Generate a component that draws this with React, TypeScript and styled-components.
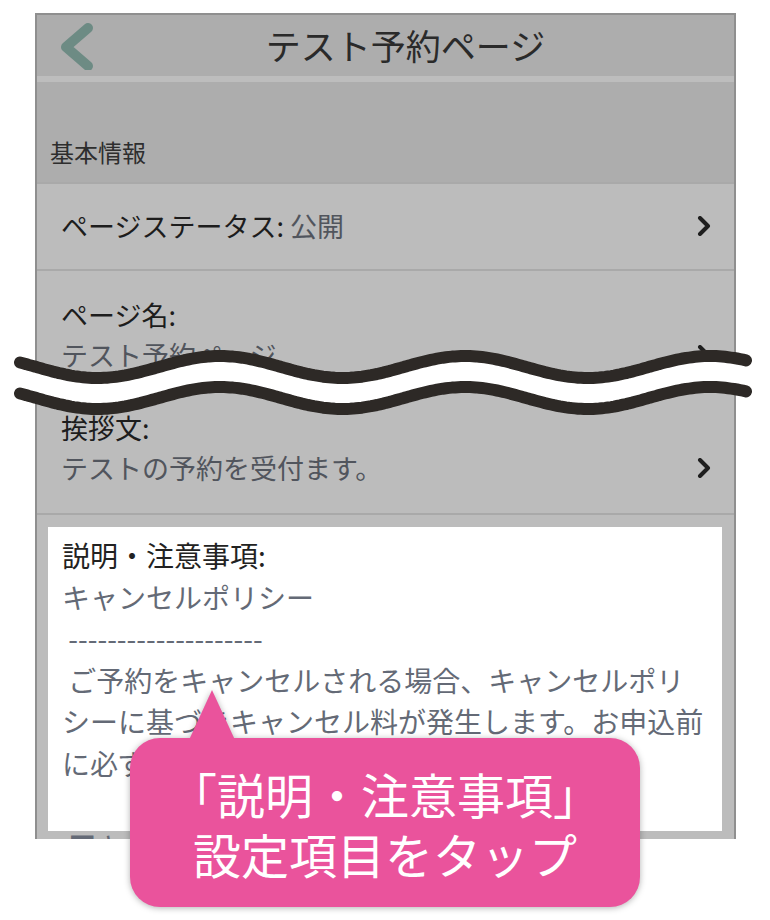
import React from 'react';
import styled, { createGlobalStyle } from 'styled-components';

const GlobalStyle = createGlobalStyle`
  html, body { margin: 0; padding: 0; background: #ffffff; }
  body { font-family: "Noto Sans CJK JP", "Noto Sans", sans-serif; }
  * { box-sizing: border-box; }
`;

const Page = styled.div`
  position: relative;
  width: 770px;
  height: 920px;
  padding: 13px 34px 0 35px;
  overflow: hidden;
`;

const Screen = styled.div`
  width: 701px;
  height: 826px;
  border: 2px solid #8f8f8f;
  border-bottom: none;
  background: #bcbcbc;
  overflow: hidden;
`;

const NavBar = styled.div`
  height: 67px;
  display: flex;
  align-items: center;
  background: #adadad;
  border-bottom: 6px solid #bdbdbd;
`;

const BackButton = styled.div`
  width: 56px;
  margin-left: 24px;
  display: flex;
  align-items: center;
`;

const Title = styled.div`
  flex: 1;
  text-align: center;
  padding-right: 40px;
  padding-bottom: 2px;
  font-size: 35px;
  line-height: 48px;
  color: #2a2a2a;
`;

const SectionHeader = styled.div`
  height: 100px;
  display: flex;
  align-items: flex-end;
  padding: 0 0 13px 13px;
  background: #adadad;
  font-size: 24px;
  line-height: 34px;
  color: #2e2e2e;
`;

const Row = styled.div<{ $top: number; $bottom: number }>`
  border-top: 2px solid #a9a9a9;
  padding: ${(p) => p.$top}px 23px ${(p) => p.$bottom}px 24px;
  background: #bcbcbc;
`;

const Line = styled.div`
  height: 40px;
  display: flex;
  align-items: center;
  justify-content: space-between;
  font-size: 27px;
  line-height: 40px;
  white-space: nowrap;
`;

const Label = styled.span`
  color: #1d1d1d;
`;

const Value = styled.span`
  color: #51555d;
`;

const Highlight = styled.div`
  border-top: 2px solid #a9a9a9;
  padding: 12px 12px 0 11px;
  background: #bcbcbc;
`;

const WhiteBox = styled.div`
  height: 304px;
  background: #ffffff;
  padding: 8px 14px 0;
  font-size: 28px;
  line-height: 41.5px;
`;

const DescLine = styled.div<{ $dark?: boolean }>`
  height: 41.5px;
  white-space: pre;
  color: ${(p) => (p.$dark ? '#222222' : '#646a76')};
`;

const Callout = styled.div`
  position: absolute;
  left: 130px;
  top: 738px;
  width: 510px;
  height: 169px;
  border-radius: 30px;
  background: #ea539c;
  display: flex;
  flex-direction: column;
  align-items: center;
  justify-content: center;
  filter: drop-shadow(0 1px 3px rgba(0, 0, 0, 0.3));
  color: #ffffff;
  font-size: 48px;
  line-height: 60px;
  white-space: nowrap;

  &::before {
    content: '';
    position: absolute;
    left: 59px;
    top: -48px;
    width: 46px;
    height: 50px;
    background: #ea539c;
    clip-path: polygon(50% 0, 100% 100%, 0 100%);
  }
`;

const Overlay = styled.svg`
  position: absolute;
  left: 0;
  top: 0;
  width: 770px;
  height: 920px;
  pointer-events: none;
`;

const Chevron = () => (
  <svg width="14" height="20" viewBox="0 0 14 20">
    <polyline points="3,2 11,10 3,18" fill="none" stroke="#1e1e1e" strokeWidth="4" strokeLinejoin="round" strokeLinecap="round" />
  </svg>
);

const BackIcon = () => (
  <svg width="34" height="48" viewBox="0 0 34 48">
    <polyline points="27,6 5,25 27,44" fill="none" stroke="#6d8b84" strokeWidth="10" strokeLinejoin="round" strokeLinecap="round" />
  </svg>
);

const wavePoints = (offset: number) => {
  const pts: [number, number][] = [];
  for (let x = 20; x <= 746; x += 3) {
    const y = 367 + offset - 11 * Math.cos((2 * Math.PI * (x - 220)) / 245);
    pts.push([x, y]);
  }
  return pts;
};

const Wave = () => {
  const top = wavePoints(0);
  const bottom = wavePoints(31);
  const toStr = (p: [number, number][]) => p.map(([x, y]) => `${x.toFixed(1)},${y.toFixed(1)}`).join(' ');
  const band = toStr(top) + ' ' + toStr([...bottom].reverse());
  return (
    <Overlay viewBox="0 0 770 920">
      <polygon points={band} fill="#ffffff" />
      <polyline points={toStr(top)} fill="none" stroke="#2d2926" strokeWidth="12" strokeLinecap="round" strokeLinejoin="round" />
      <polyline points={toStr(bottom)} fill="none" stroke="#2d2926" strokeWidth="12" strokeLinecap="round" strokeLinejoin="round" />
    </Overlay>
  );
};

const descLines = [
  'キャンセルポリシー',
  ' --------------------',
  ' ご予約をキャンセルされる場合、キャンセルポリ',
  'シーに基づきキャンセル料が発生します。お申込前',
  'に必ずご確認ください。',
  ' ',
  ' ■キャンセル料について',
];

export default function App() {
  return (
    <>
      <GlobalStyle />
      <Page>
        <Screen>
          <NavBar>
            <BackButton>
              <BackIcon />
            </BackButton>
            <Title>テスト予約ページ</Title>
          </NavBar>
          <SectionHeader>基本情報</SectionHeader>
          <Row $top={22} $bottom={23}>
            <Line>
              <span>
                <Label>ページステータス: </Label>
                <Value>公開</Value>
              </span>
              <Chevron />
            </Line>
          </Row>
          <Row $top={24} $bottom={9}>
            <Line>
              <Label>ページ名:</Label>
            </Line>
            <Line>
              <Value>テスト予約ページ</Value>
              <Chevron />
            </Line>
          </Row>
          <Row $top={22} $bottom={25}>
            <Line>
              <Label>挨拶文:</Label>
            </Line>
            <Line>
              <Value>テストの予約を受付ます。</Value>
              <Chevron />
            </Line>
          </Row>
          <Highlight>
            <WhiteBox>
              <DescLine $dark>説明・注意事項:</DescLine>
              {descLines.map((l, i) => (
                <DescLine key={i}>{l}</DescLine>
              ))}
            </WhiteBox>
          </Highlight>
        </Screen>
        <Wave />
        <Callout>
          <div>「説明・注意事項」</div>
          <div>設定項目をタップ</div>
        </Callout>
      </Page>
    </>
  );
}
